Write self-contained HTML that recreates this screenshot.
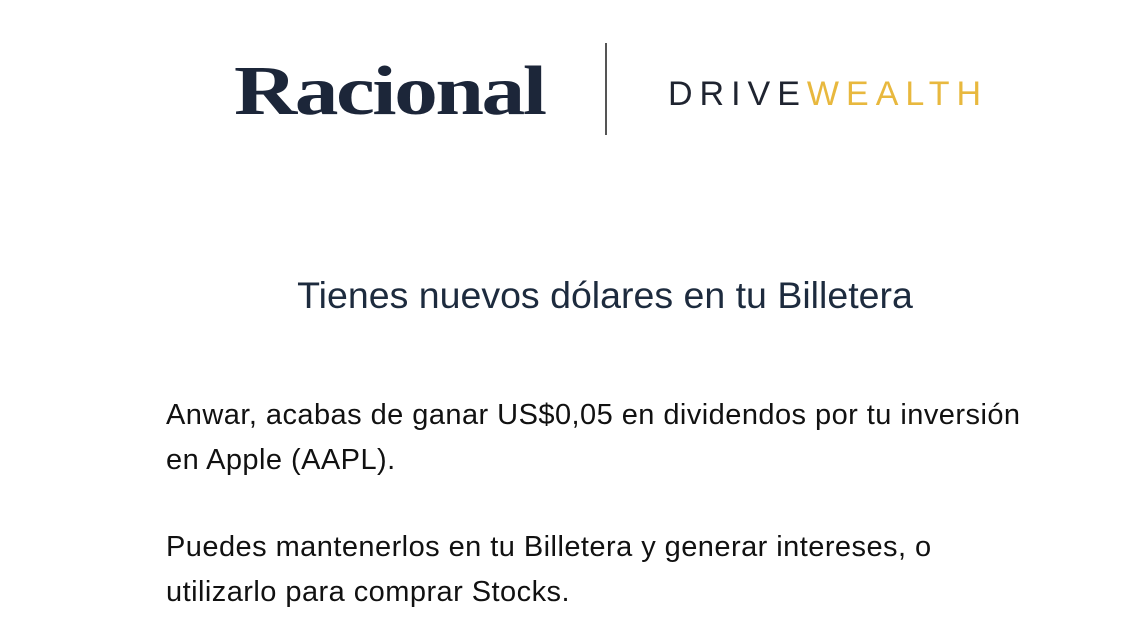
<!DOCTYPE html>
<html><head><meta charset="utf-8"><style>
html,body{margin:0;padding:0;background:#fff;width:1140px;height:642px;overflow:hidden;font-family:"Liberation Sans",sans-serif}
.rac{position:absolute;left:234px;top:52px;font-family:"Liberation Serif",serif;font-weight:bold;font-size:70px;color:#1c2639;letter-spacing:-2px;transform-origin:left top;white-space:nowrap;line-height:80px}
.div{position:absolute;left:605px;top:43px;width:2px;height:92px;background:#555}
.dw{position:absolute;left:668px;top:74px;font-size:34px;letter-spacing:7px;color:#1f2430;white-space:nowrap;line-height:40px}
.dw span{color:#e8b83e}
.t{position:absolute;left:0;width:1210px;text-align:center;top:274px;font-size:37.5px;color:#1d2b3e}
.p{position:absolute;left:166px;font-size:29px;letter-spacing:0.45px;color:#111;line-height:45px;white-space:nowrap}
</style></head><body>
<div class="rac" id="r">Racional</div>
<div class="div"></div>
<div class="dw">DRIVE<span>WEALTH</span></div>
<div class="t">Tienes nuevos dólares en tu Billetera</div>
<div class="p" style="top:393px">Anwar, acabas de ganar US$0,05 en dividendos por tu inversión<br>en Apple (AAPL).</div>
<div class="p" style="top:525px">Puedes mantenerlos en tu Billetera y generar intereses, o<br>utilizarlo para comprar Stocks.</div>
<script>var r=document.getElementById('r');r.style.transform='scaleX('+(310/r.offsetWidth)+')';</script>
</body></html>
